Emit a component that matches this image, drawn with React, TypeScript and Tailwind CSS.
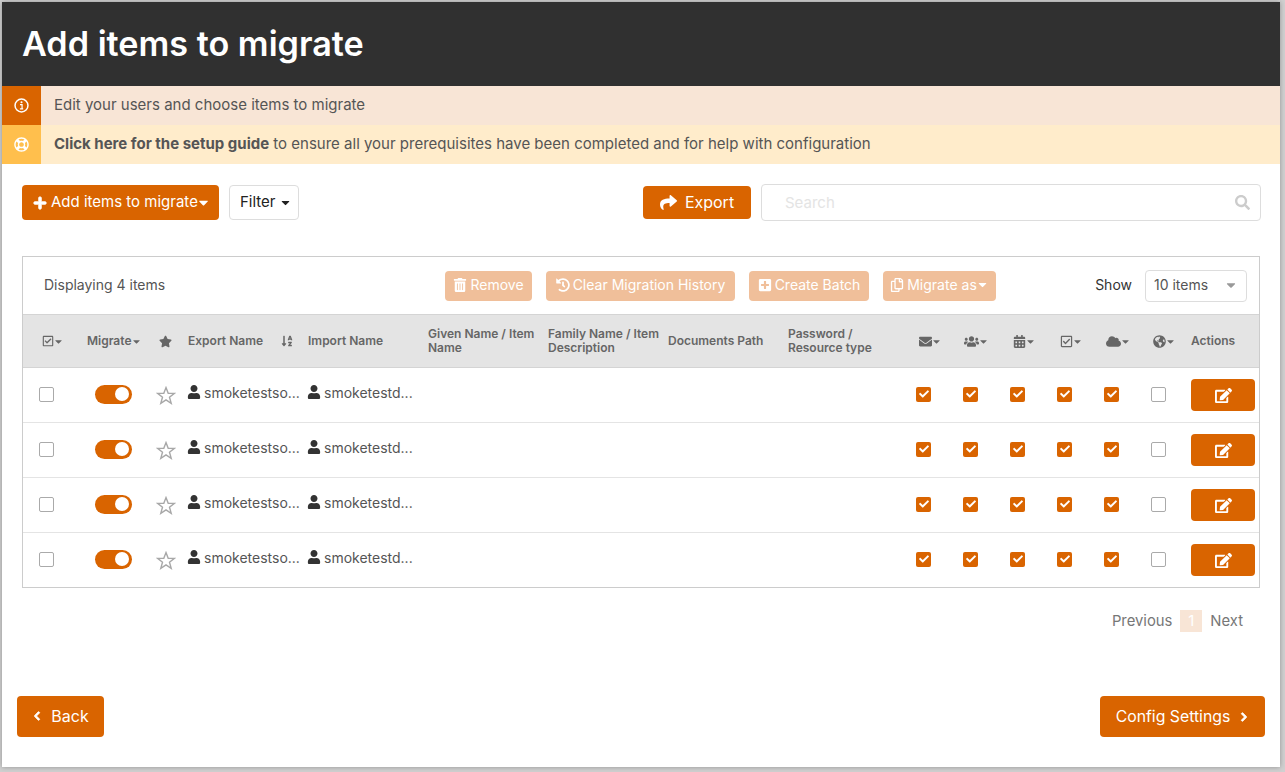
import {
  FaCalendarAlt,
  FaCaretDown,
  FaCheck,
  FaChevronLeft,
  FaChevronRight,
  FaCloud,
  FaEdit,
  FaEnvelope,
  FaGlobeAmericas,
  FaHistory,
  FaPlus,
  FaPlusSquare,
  FaRegCheckSquare,
  FaRegCopy,
  FaRegLifeRing,
  FaSearch,
  FaShare,
  FaSortAlphaDown,
  FaStar,
  FaTrashAlt,
  FaUser,
  FaUsers,
} from "react-icons/fa"

const gridCols =
  "grid grid-cols-[60px_72px_29px_120px_120px_120px_120px_120px_128px_47px_47px_47px_47px_47px_40px_72px] items-center"

const rows = [0, 1, 2, 3]
const itemChecks = [true, true, true, true, true, false]

const Checkbox = ({ checked = false }: { checked?: boolean }) =>
  checked ? (
    <span className="flex h-[15px] w-[15px] items-center justify-center rounded-[2px] bg-[#d96400] text-white">
      <FaCheck className="text-[10px]" />
    </span>
  ) : (
    <span className="block h-[15px] w-[15px] rounded-[2px] border border-[#aaaaaa] bg-white" />
  )

const InfoRing = () => (
  <svg viewBox="0 0 16 16" className="h-[15px] w-[15px]" fill="none" stroke="currentColor">
    <circle cx="8" cy="8" r="6.9" strokeWidth="1.6" />
    <circle cx="8" cy="4.6" r="1.1" fill="currentColor" stroke="none" />
    <path d="M6.4 7h2.2v4.3M6.3 11.5h3.5" strokeWidth="1.3" />
  </svg>
)

const OutlineStar = () => (
  <svg viewBox="0 0 20 19" className="h-[19px] w-[20px]" fill="white" stroke="#a8a8a8" strokeWidth="1.4">
    <polygon points="10,1.6 12.2,7.2 18.4,7.4 13.5,11.2 15.2,17.3 10,13.8 4.8,17.3 6.5,11.2 1.6,7.4 7.8,7.2" />
  </svg>
)

const HeadCaret = () => <FaCaretDown className="-ml-[1px] text-[11px]" />

const BatchButton = ({ icon, label, caret, width }: { icon: React.ReactNode; label: string; caret?: boolean; width: string }) => (
  <button className={`flex h-[30px] items-center justify-center gap-[3px] rounded-[4px] bg-[#f0bf9a] pb-[2px] text-[14px] text-white ${width}`}>
    {icon}
    <span>{label}</span>
    {caret && <FaCaretDown className="-ml-[4px] text-[13px]" />}
  </button>
)

const App = () => {
  return (
    <div className="h-[772px] w-[1285px] overflow-hidden bg-[#d0d0d0] pl-[2px] pt-[2px] font-['Inter',sans-serif] text-[#555555]">
      <div className="flex h-[765px] w-[1278px] flex-col bg-white shadow-[0_0_5px_rgba(0,0,0,0.3)]">
        <header className="flex h-[84px] items-center bg-[#303030] pl-[20px]">
          <h1 className="text-[34.2px] font-semibold text-white">Add items to migrate</h1>
        </header>

        <div className="flex h-[39px] items-center bg-[#f8e5d6]">
          <span className="flex h-full w-[39px] items-center justify-center bg-[#d96400] text-white">
            <InfoRing />
          </span>
          <p className="pb-[1px] pl-[13px] text-[15px]">Edit your users and choose items to migrate</p>
        </div>
        <div className="flex h-[39px] items-center bg-[#ffeccb]">
          <span className="flex h-full w-[39px] items-center justify-center bg-[#ffbf4d] text-white">
            <FaRegLifeRing className="text-[15px]" />
          </span>
          <p className="pb-[1px] pl-[13px] text-[15px]">
            <strong className="font-bold">Click here for the setup guide</strong> to ensure all your prerequisites have been completed and for help with configuration
          </p>
        </div>

        <div className="flex items-center pl-[20px] pr-[19px] pt-[20px]">
          <button className="flex h-[35px] w-[197px] items-center gap-[4px] rounded-[4px] bg-[#d96400] pl-[11px] text-[15px] text-white">
            <FaPlus className="text-[14px]" stroke="currentColor" strokeWidth={30} />
            <span>Add items to migrate</span>
            <FaCaretDown className="-ml-[6px] text-[15px]" />
          </button>
          <button className="ml-[10px] flex h-[35px] w-[70px] items-center gap-[3px] rounded-[4px] border border-[#dddddd] pl-[10px] text-[15px] text-[#222222]">
            Filter <FaCaretDown className="text-[13px]" />
          </button>
          <button className="ml-auto flex h-[33px] w-[108px] items-center justify-center gap-[8px] rounded-[4px] bg-[#d96400] pb-[1px] text-[16px] text-white">
            <FaShare className="text-[17px]" />
            Export
          </button>
          <div className="ml-[10px] flex h-[37px] w-[500px] items-center justify-between rounded-[4px] border border-[#dddddd] pl-[23px] pr-[10px]">
            <span className="pt-[1px] text-[15px] text-[#e4e4e4]">Search</span>
            <FaSearch className="text-[15px] text-[#cccccc]" />
          </div>
        </div>

        <section className="mx-[20px] mt-[35px] border border-[#cccccc]">
          <div className="flex h-[57px] items-center pl-[21px] pr-[12px]">
            <span className="w-[401px] pb-[2px] text-[14px]">Displaying 4 items</span>
            <div className="flex gap-[14px]">
              <BatchButton icon={<FaTrashAlt className="text-[14px]" />} label="Remove" width="w-[87px]" />
              <BatchButton icon={<FaHistory className="text-[14px]" />} label="Clear Migration History" width="w-[189px]" />
              <BatchButton icon={<FaPlusSquare className="text-[14px]" />} label="Create Batch" width="w-[120px]" />
              <BatchButton icon={<FaRegCopy className="text-[14px]" />} label="Migrate as" caret width="w-[113px]" />
            </div>
            <span className="ml-auto pb-[2px] text-[14px] text-[#333333]">Show</span>
            <div className="ml-[13px] flex h-[32px] w-[102px] items-center justify-between rounded-[4px] border border-[#dddddd] px-[8px] pb-[2px] text-[14px]">
              10 items
              <FaCaretDown className="text-[14px] text-[#999999]" />
            </div>
          </div>

          <div className={`${gridCols} h-[54px] border-y border-[#d4d4d4] bg-[#e4e4e4] text-[12px] font-semibold leading-[14px] text-[#666666]`}>
            <span className="flex items-center pl-[19px]">
              <FaRegCheckSquare className="text-[12px]" />
              <HeadCaret />
            </span>
            <span className="flex items-center pl-[4px]">
              Migrate
              <FaCaretDown className="text-[11px]" />
            </span>
            <span className="pl-[4px]">
              <FaStar className="text-[13px]" />
            </span>
            <span className="flex items-center justify-between pl-[4px] pr-[11px]">
              Export Name
              <FaSortAlphaDown className="text-[12px]" />
            </span>
            <span className="pl-[4px]">Import Name</span>
            <span className="pl-[4px]">Given Name / Item Name</span>
            <span className="pl-[4px]">Family Name / Item Description</span>
            <span className="pl-[4px]">Documents Path</span>
            <span className="pl-[4px]">
              Password /<br />
              Resource type
            </span>
            <span className="flex items-center pl-[7px]">
              <FaEnvelope className="text-[13px]" />
              <HeadCaret />
            </span>
            <span className="flex items-center pl-[5px]">
              <FaUsers className="text-[15px]" />
              <HeadCaret />
            </span>
            <span className="flex items-center pl-[7px]">
              <FaCalendarAlt className="text-[13px]" />
              <HeadCaret />
            </span>
            <span className="flex items-center pl-[7px]">
              <FaRegCheckSquare className="text-[13px]" />
              <HeadCaret />
            </span>
            <span className="flex items-center pl-[6px]">
              <FaCloud className="text-[15px]" />
              <HeadCaret />
            </span>
            <span className="flex items-center pl-[6px]">
              <FaGlobeAmericas className="text-[13px]" />
              <HeadCaret />
            </span>
            <span className="pl-[4px]">Actions</span>
          </div>

          {rows.map((row) => (
            <div key={row} className={`${gridCols} h-[55px] border-b border-[#e4e4e4] text-[14px] last:h-[54px] last:border-b-0`}>
              <span className="pb-[2px] pl-[16px]">
                <Checkbox />
              </span>
              <span className="pb-[2px] pl-[12px]">
                <span className="flex h-[19px] w-[37px] items-center justify-end rounded-full bg-[#d96400] pr-[3px]">
                  <span className="h-[14px] w-[14px] rounded-full bg-white" />
                </span>
              </span>
              <span className="pl-[1px]">
                <OutlineStar />
              </span>
              <span className="flex items-center gap-[3px] pb-[6px] pl-[3px]">
                <FaUser className="shrink-0 text-[14px] text-[#333333]" />
                smoketestso...
              </span>
              <span className="flex items-center gap-[3px] pb-[6px] pl-[3px]">
                <FaUser className="shrink-0 text-[14px] text-[#333333]" />
                smoketestd...
              </span>
              <span />
              <span />
              <span />
              <span />
              {itemChecks.map((checked, i) => (
                <span key={i} className="pb-[2px] pl-[4px]">
                  <Checkbox checked={checked} />
                </span>
              ))}
              <span className="pl-[4px]">
                <button className="flex h-[32px] w-[64px] items-center justify-center rounded-[4px] bg-[#d96400] text-white">
                  <FaEdit className="text-[17px]" />
                </button>
              </span>
            </div>
          ))}
        </section>

        <div className="mr-[37px] mt-[21px] flex items-center justify-end text-[14.8px] text-[#777777]">
          <span className="pt-[1px]">Previous</span>
          <span className="mx-[8px] flex h-[22px] w-[22px] items-center justify-center bg-[#f8e5d6] text-white">1</span>
          <span className="pt-[1px]">Next</span>
        </div>

        <div className="mt-auto mb-[30px] flex justify-between px-[15px]">
          <button className="flex h-[41px] w-[87px] items-center justify-center gap-[9px] rounded-[4px] bg-[#d96400] pb-[1px] text-[16px] text-white">
            <FaChevronLeft className="text-[10px]" stroke="currentColor" strokeWidth={50} />
            Back
          </button>
          <button className="flex h-[41px] w-[165px] items-center justify-center gap-[9px] rounded-[4px] bg-[#d96400] text-[15.8px] text-white">
            Config Settings
            <FaChevronRight className="text-[10px]" stroke="currentColor" strokeWidth={50} />
          </button>
        </div>
      </div>
    </div>
  )
}

export default App
